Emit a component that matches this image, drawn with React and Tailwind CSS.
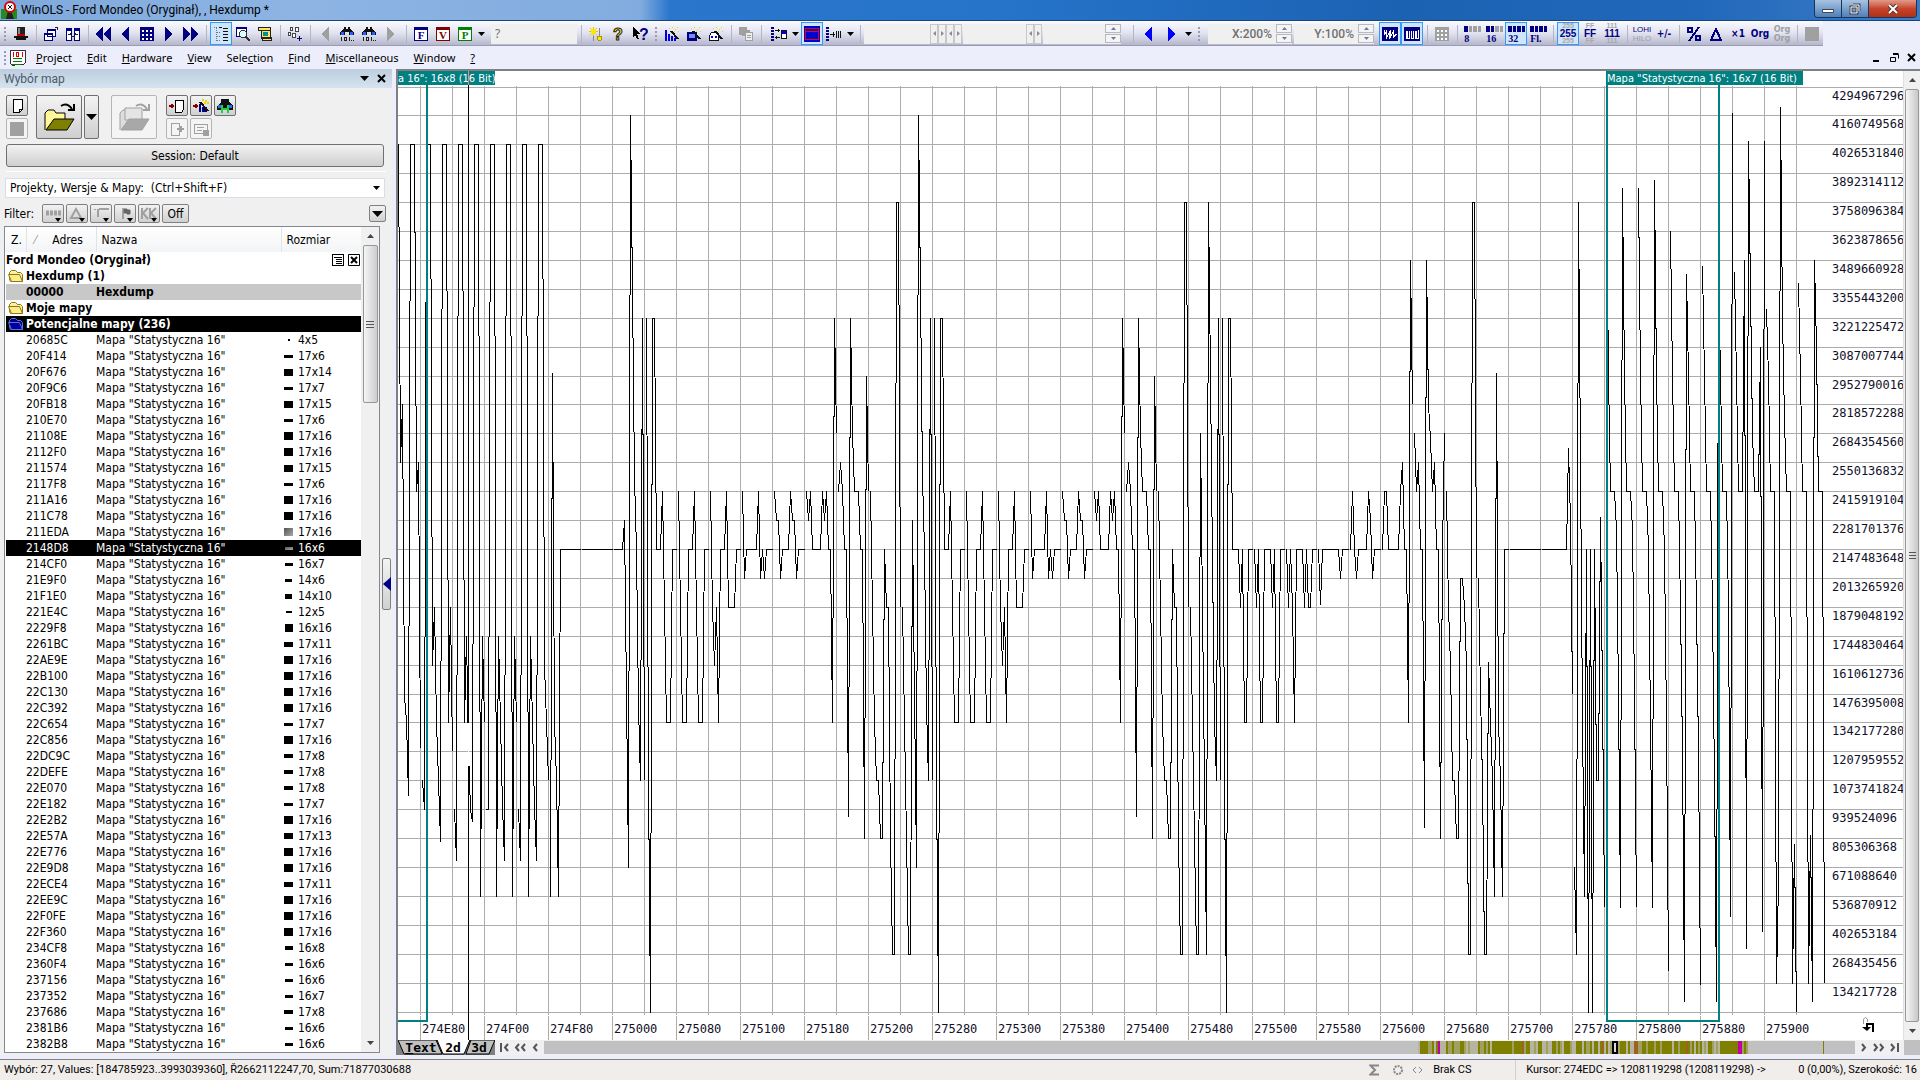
import { useState } from "react";

const NAVY = "#000080";

/* ---------- data ---------- */

const maps = [
  ["20685C", 4, 5], ["20F414", 17, 6], ["20F676", 17, 14], ["20F9C6", 17, 7],
  ["20FB18", 17, 15], ["210E70", 17, 6], ["21108E", 17, 16], ["2112F0", 17, 16],
  ["211574", 17, 15], ["2117F8", 17, 6], ["211A16", 17, 16], ["211C78", 17, 16],
  ["211EDA", 17, 16], ["2148D8", 16, 6], ["214CF0", 16, 7], ["21E9F0", 14, 6],
  ["21F1E0", 14, 10], ["221E4C", 12, 5], ["2229F8", 16, 16], ["2261BC", 17, 11],
  ["22AE9E", 17, 16], ["22B100", 17, 16], ["22C130", 17, 16], ["22C392", 17, 16],
  ["22C654", 17, 7], ["22C856", 17, 16], ["22DC9C", 17, 8], ["22DEFE", 17, 8],
  ["22E070", 17, 8], ["22E182", 17, 7], ["22E2B2", 17, 16], ["22E57A", 17, 13],
  ["22E776", 17, 16], ["22E9D8", 17, 16], ["22ECE4", 17, 11], ["22EE9C", 17, 16],
  ["22F0FE", 17, 16], ["22F360", 17, 16], ["234CF8", 16, 8], ["2360F4", 16, 6],
  ["237156", 16, 6], ["237352", 16, 7], ["237686", 17, 8], ["2381B6", 16, 6],
  ["2382B8", 16, 6],
];

const flat = Array(16).fill(16);

// 16 samples per row, unit is 1/32 of the full 32 bit range
const block = [
  [24, 8, 0, 24, 24, 16, 16, 16, 18, 14, 10, 10, 10, 16, 16, 16],
  [18, 14, 10, 10, 10, 16, 16, 16, 18, 14, 10, 10, 10, 16, 16, 16],
  [18, 14, 12, 14, 10, 16, 16, 16, 18, 14, 14, 14, 14, 16, 16, 16],
  [18, 15, 16, 16, 16, 16, 16, 16, 18, 15, 16, 15, 16, 16, 16, 16],
  [18, 17, 17, 15, 16, 16, 16, 16, 18, 17, 17, 15, 16, 16, 16, 16],
  [18, 17, 18, 16, 16, 16, 16, 16, 18, 17, 18, 16, 16, 10, 24, 20],
  [18, 19, 18, 16, 16, 6.75, 24, 20, 18, 18, 18, 16, 16, 6, 22, 18],
  [18, 14, 10, 8, 8, 6, 6, 16, 14, 14, 6, 2, 2, 28, 28, 14],
];

const samples = [
  [30, 30, 30, 30, 30, 19, 21, 10.9, 10.1, 7.5, 30, 30, 30, 18, 19, 9.1],
  [8, 7, 30, 30, 30, 12, 14, 10, 8, 5.9, 30, 30, 30, 10, 14, 9],
  [7, 5.25, 30, 30, 30, 10, 13, 9, 7, 6.6, 30, 30, 30, 4, 13, 10],
  [7, 7, 30, 30, 30, 4, 13, 10, 7.1, 5.25, 30, 30, 30, 4, 13, 10],
  [7, 5.25, 30, 30, 30, 4, 13, 10, 7.1, 5.25, 30, 30, 30, 12, 10, 8],
  [4, 22.1, 10, 8, 4, 16, 16, 16, 16, 16, 16, 16, 16, 16, 16, 16],
  flat,
  [16, 16, 16, 16, 16, 17, 11, 5, 31, 25, 18.5, 16, 10.6, 8, 24, 8],
  ...block,
  [14, 10, 6, 2, 2, 17, 11, 5, 31, 25, 18.5, 16, 10.6, 8, 24, 8],
  ...block,
  [14, 10, 6, 2, 2, 20, 14, 8, 2, 28, 22, 15.6, 10, 8, 24, 8],
  [24, 8, 0, 24, 24, 16, 16, 16, 16, 14, 16, 10, 10, 16, 16, 16],
  [16, 14, 16, 10, 10, 16, 16, 16, 16, 14, 16, 10, 10, 16, 16, 16],
  [16, 14, 16, 14, 10, 16, 16, 16, 16, 14, 16, 14, 14, 16, 16, 16],
  [16, 14.1, 16, 16, 16, 16, 16, 16, 16, 16, 16, 15, 16, 16, 16, 16],
  [16, 18, 16, 15, 16, 16, 16, 16, 16, 18, 17, 15, 16, 16, 16, 16],
  [16, 18, 18, 16, 16, 16, 16, 16, 16, 18, 19, 16, 16, 10, 26, 21],
  [20, 18, 19, 16, 16, 6.4, 26, 21, 19.8, 18, 19, 16, 16, 6, 16, 20],
  [18, 14, 12, 8, 8, 6, 6, 15, 15, 14, 12, 2, 2, 28, 28, 15],
  [15, 11, 8, 2, 2, 12.1, 10, 8, 4, 22.1, 10, 8, 4, 16, 16, 16],
  flat,
  [16, 16, 16, 16, 16, 16, 16, 16, 16, 16, 16, 16, 16, 19.5, 17, 11],
  [5, 2, 28, 19, 10, 4, 16, 0, 16, 0, 16, 8, 8, 17.1, 11, 3.6],
  [28.5, 22, 18, 18, 18, 16.7, 11, 3.6, 28.5, 22, 18, 18, 18, 16.7, 11, 3.6],
  [28.5, 22, 18, 18, 18, 16, 10, 3.6, 28.75, 22, 18, 18, 18, 16, 10, 1.4],
  [27, 22, 18, 18, 18, 14, 9, 0.35, 25.5, 22, 18, 18, 18, 14, 9, 0.9],
  [25.8, 22, 18, 18, 18, 14, 8, 0.35, 25.8, 22, 18, 18, 18, 14, 3.3, 31.1],
  [25.6, 22, 18, 18, 18, 26, 2.2, 30.1, 25, 20, 18, 18, 18, 23, 2.8, 30.1],
  [24.3, 22, 18, 18, 18, 1, 4.5, 31.3, 24, 20.5, 18, 18, 18, 1, 5.8, 0],
  [25.2, 22, 18, 18, 18, 1, 6.1, 0.35, 26, 23, 18, 18, 18, 1],
];

/* ---------- small building blocks ---------- */

const Pix = ({ children, size = 16 }) => (
  <svg width={size} height={size} viewBox="0 0 16 16" shapeRendering="crispEdges" fill="none" className="shrink-0" aria-hidden="true">
    {children}
  </svg>
);

const Down = () => (
  <svg width="7" height="4" viewBox="0 0 7 4" aria-hidden="true">
    <path d="M0 0h7L3.500 4z" fill="#000" />
  </svg>
);

const Tool = ({ label, on, children }) => (
  <button
    type="button"
    aria-label={label}
    className={
      on
        ? "flex h-[23px] w-[22px] shrink-0 items-center justify-center border border-[#3399ff] bg-[#cfe5fa]"
        : "flex h-[23px] w-[22px] shrink-0 items-center justify-center"
    }
  >
    {children}
  </button>
);

const Drop = ({ label }) => (
  <button type="button" aria-label={label} className="flex h-[22px] w-[11px] shrink-0 items-center justify-center">
    <Down />
  </button>
);

const Sep = () => (
  <div className="flex w-2 shrink-0 justify-center">
    <div className="h-[18px] w-px bg-[#b4b5c4]" />
  </div>
);

const Grip = () => (
  <div className="flex w-[10px] shrink-0 flex-col items-center gap-[2px]">
    <i className="size-[2px] bg-[#9a9bb0]" />
    <i className="size-[2px] bg-[#9a9bb0]" />
    <i className="size-[2px] bg-[#9a9bb0]" />
    <i className="size-[2px] bg-[#9a9bb0]" />
  </div>
);

const Spin = ({ label }) => (
  <div className="flex w-4 shrink-0 flex-col gap-px">
    <button type="button" aria-label={`${label} up`} className="flex h-[9px] items-center justify-center border border-[#b8b8c0] bg-[#f4f4f4]">
      <svg width="5" height="3" aria-hidden="true"><path d="M0 3h5L2.500 0z" fill="#6b78a8" /></svg>
    </button>
    <button type="button" aria-label={`${label} down`} className="flex h-[9px] items-center justify-center border border-[#b8b8c0] bg-[#f4f4f4]">
      <svg width="5" height="3" aria-hidden="true"><path d="M0 0h5L2.500 3z" fill="#6b78a8" /></svg>
    </button>
  </div>
);

const SideSpin = ({ label }) => (
  <div className="flex w-4 shrink-0">
    <button type="button" aria-label={`${label} left`} className="flex h-5 w-2 items-center justify-center border border-[#c8c8cc] bg-[#f0f0f0]">
      <svg width="3" height="5" aria-hidden="true"><path d="M3 0v5L0 2.500z" fill="#8a8a94" /></svg>
    </button>
    <button type="button" aria-label={`${label} right`} className="flex h-5 w-2 items-center justify-center border border-[#c8c8cc] bg-[#f0f0f0]">
      <svg width="3" height="5" aria-hidden="true"><path d="M0 0v5L3 2.500z" fill="#8a8a94" /></svg>
    </button>
  </div>
);

/* ---------- icons ---------- */

const Hat = () => (
  <Pix>
    <path d="M4 1h8v9H4z" fill="#222" />
    <path d="M4 8h8v2H4z" fill="#c00000" />
    <path d="M1 10h14v2H1zM3 12h10v2H3z" fill="#111" />
    <path d="M5 2h2v6H5z" fill="#888" />
  </Pix>
);

const Windows = ({ split }) => (
  <Pix>
    {split ? (
      <>
        <path d="M1.500 3.500h5v11h-5zM9.500 3.500h5v11h-5z" fill="#fff" stroke={NAVY} />
        <path d="M1 2h6v3H1zM9 2h6v3H9z" fill={NAVY} />
        <path d="M3 8.500h3M10 8.500h3M6 10.500h4M6 7l-2 2M10 7l2 2" stroke="#222" />
      </>
    ) : (
      <>
        <path d="M4.500 3.500h8v7h-8zM1.500 7.500h8v7h-8z" fill="#fff" stroke={NAVY} />
        <path d="M4 3h9v2H4zM1 7h9v2H1z" fill={NAVY} />
        <path d="M12 1.500h3M14.500 1v3" stroke="#222" />
      </>
    )}
  </Pix>
);

const Arrow = ({ dir, double, color = NAVY }) => (
  <Pix>
    <g transform={dir === "right" ? "matrix(-1 0 0 1 16 0)" : undefined} fill={color}>
      {double ? <path d="M8 1v14L0 8zM16 1v14L8 8z" /> : <path d="M12 1v14L4 8z" />}
    </g>
  </Pix>
);

const GridIcon = ({ color = NAVY }) => (
  <Pix>
    <path d="M1 1h14v14H1z" fill={color} />
    <path d="M3 4h2v2H3zM7 4h2v2H7zM11 4h2v2h-2zM3 8h2v2H3zM7 8h2v2H7zM11 8h2v2h-2zM3 12h2v2H3zM7 12h2v2H7zM11 12h2v2h-2z" fill="#fff" />
  </Pix>
);

const Tree = () => (
  <Pix>
    <path d="M1 1.500h4M3.500 2v13M4 6.500h4M4 10.500h4M4 14.500h4" stroke="#777" strokeDasharray="1 1" />
    <path d="M6 1.500h3M10 2.500h5M10 5.500h5M10 8.500h5M10 11.500h5M10 14.500h5" stroke="#111" />
  </Pix>
);

const Lens = () => (
  <Pix>
    <path d="M1.500 1.500h10v9h-10z" fill="#fff" stroke={NAVY} />
    <path d="M1 1h11v2H1z" fill={NAVY} />
    <circle cx="8" cy="8" r="3.500" fill="#dff" stroke="#333" />
    <path d="M11 11l4 4" stroke="#333" strokeWidth="2" />
  </Pix>
);

const Scroll = () => (
  <Pix>
    <path d="M1.500 1.500h12v3h-12zM4.500 4.500h9v8h-9zM4.500 11.500h10v3h-9z" fill="#ffe45c" stroke="#222" />
    <path d="M6 6h5v4H6z" fill="#009090" />
  </Pix>
);

const Steps = () => (
  <Pix>
    <path d="M3.500 1.500h2v3h-2zM1.500 6.500h2v3h-2zM8.500 1.500h3v4h-3zM5.500 7.500h3v4h-3z" fill="#fff" stroke="#444" />
    <path d="M10 12.500h5M12.500 10v5" stroke={NAVY} />
  </Pix>
);

const Binoculars = () => (
  <Pix>
    <path d="M5 1h2v2h2V1h2v2l4 3v3h-5V6H6v3H1V6l4-3z" fill="#111" />
    <path d="M2 6h3v3H2zM11 6h3v3h-3z" fill="#2a5cff" />
    <path d="M2.500 11v4M5.500 11.500h2v3h-2zM10.500 11v4M12 14.500h1M14 14.500h1" stroke="#222" />
  </Pix>
);

const Letter = ({ ch, color }) => (
  <Pix>
    <path d="M1.500 2.500h13v12h-13z" fill="#fff" stroke={color} />
    <path d="M1 1h14v3H1z" fill={color} />
    <text x="8" y="13" textAnchor="middle" fontSize="11" fontWeight="700" fontFamily="Liberation Serif, serif" fill={color}>{ch}</text>
  </Pix>
);

const Mark = ({ cursor }) => (
  <Pix>
    {cursor && <path d="M1 1l7 7H5l2 5H5L3 9l-2 2z" fill="#000" />}
    <text
      x={cursor ? 12 : 8}
      y="14"
      textAnchor="middle"
      fontSize="16"
      fontWeight="700"
      fontFamily="Liberation Sans, sans-serif"
      fill={cursor ? NAVY : "#ffe600"}
      stroke={cursor ? "none" : "#222"}
      strokeWidth="1"
    >
      ?
    </text>
  </Pix>
);

const Sun = () => (
  <Pix>
    <path d="M5 1v9M1 5.500h9M2 2l7 7M9 2L2 9" stroke="#d8c800" />
    <path d="M3 3h5v5H3z" fill="#ffe600" />
    <path d="M5.500 10v5M11.500 2v9" stroke="#888" />
    <path d="M9 10h5l-1 4h-3z" fill="#ffe600" stroke="#a89800" />
  </Pix>
);

const Wand = ({ kind }) => (
  <Pix>
    {kind === 0 && <path d="M1 4h2v11H1zM4 8h2v7H4zM7 10h2v5H7zM10 12h2v3h-2z" fill="#0000e0" />}
    {kind === 1 && <path d="M1 6h10v9H1z" fill={NAVY} />}
    {kind === 1 && <path d="M3 8h6v4H3z" fill="#6f8fff" />}
    {kind === 2 && <path d="M1.500 9.500l2-3h4l3 3v5h-9z" fill="#fff" stroke="#111" />}
    {kind === 2 && <path d="M3 10h2v2H3zM7 10h2v2H7z" fill="#0000e0" />}
    <path d="M7 5l7 8" stroke="#111" strokeWidth="2" />
    <path d="M5 2h1v1H5zM8 1h1v1H8zM11 3h1v1h-1zM13 1h1v1h-1zM14 5h1v1h-1zM10 5h1v1h-1z" fill="#e8d800" />
  </Pix>
);

const Copy = () => (
  <Pix>
    <path d="M1 1h8v8H1zM4 4h8v6H4z" fill="#a0a0a0" />
    <path d="M7.500 6.500h7v8h-7z" fill="#eee" stroke="#a0a0a0" />
    <path d="M9 9.500h4M9 11.500h4" stroke="#a0a0a0" />
  </Pix>
);

const Rows = ({ fill }) => (
  <Pix>
    <path d="M1.500 1v14" stroke={NAVY} strokeWidth="3" strokeDasharray="2 1" />
    {fill ? (
      <path d="M4 8.500h5M7.500 6v5M10.500 5v7M12.500 5v7M14.500 5v7" stroke="#111" />
    ) : (
      <>
        <path d="M4 4.500h5M7.500 3v3M4 11.500h5M5.500 10v3" stroke="#111" />
        <path d="M10.500 4.500h5v8h-5z" fill="#fff" stroke="#111" />
        <path d="M11 5h4v3h-4z" fill="#0000e0" />
      </>
    )}
  </Pix>
);

const RedBox = () => (
  <Pix>
    <path d="M0 0h16v16H0z" fill="#0000d0" />
    <path d="M1.500 2.500h13v11h-13zM2 5.500h12" stroke="#f00000" />
  </Pix>
);

const Wave = ({ low }) => (
  <Pix size={18}>
    <path d="M1 2h14v12H1z" fill={NAVY} />
    {low ? <path d="M3.500 5v7h2V5M7.500 5v7h2V5M11.500 5v7h2V4" stroke="#fff" /> : <path d="M3 4v5l2-4v6l3-5v5l3-5v5l3-3" stroke="#fff" />}
  </Pix>
);

const Bits = ({ n, label }) => (
  <Pix size={18}>
    {[0, 1, 2, 3].map((i) => (
      <rect key={i} x={1 + i * 4} y="1" width="3" height="5" fill={i < n ? NAVY : "#a0a0a0"} />
    ))}
    <text x="1" y="15" fontSize="9" fontFamily="Liberation Serif, serif" fontWeight="700" fill={NAVY}>{label}</text>
  </Pix>
);

const Radix = ({ text }) => (
  <span className="flex h-[21px] flex-col items-center justify-center font-['Liberation_Sans',sans-serif] font-bold">
    <span className="text-[7px] leading-[6px] text-[#a8a8a8]">{text}</span>
    <span className="text-[10px] leading-[9px] text-[#000080]">{text}</span>
    <span className="text-[7px] leading-[6px] text-[#a8a8a8]">{text}</span>
  </span>
);

const Word = ({ children, dim }) => (
  <span
    className={
      dim
        ? "font-['DejaVu_Sans_Condensed',sans-serif] text-[9px] font-bold leading-[9px] text-[#a0a0a0]"
        : "font-['DejaVu_Sans_Condensed',sans-serif] text-[10px] font-bold leading-[10px] text-[#000080]"
    }
  >
    {children}
  </span>
);

const Folder = ({ dark }) => (
  <svg width="16" height="13" viewBox="0 0 16 13" className="mr-[2px] inline-block align-[-2px]" aria-hidden="true">
    <path d="M1.500 10.500v-7l2-2h4l2 2h3l2 2v7h-12z" fill={dark ? "#000080" : "#fff0a0"} stroke={dark ? "#6070e0" : "#8a7a10"} />
    <path d="M3.500 12.500L.5 5.500h11l3 7z" fill={dark ? "#0000a0" : "#ffeb8c"} stroke={dark ? "#6070e0" : "#8a7a10"} />
  </svg>
);

/* ---------- bars ---------- */

const TitleBar = () => (
  <header className="flex h-[21px] shrink-0 items-start justify-between border-b border-[#1b4478] bg-[linear-gradient(90deg,#7fa9dc_0px,#8db4e3_300px,#82acdf_640px,#2a76cc_670px,#2574ca_1000px,#1c62b3_1400px,#2268ba_1700px,#3a7cc8_100%)]">
    <div className="flex h-5 items-center gap-1 pl-[1px]">
      <svg width="16" height="18" viewBox="0 0 16 18" aria-hidden="true">
        <path d="M0 8h16v10H0z" fill="#228b22" />
        <path d="M5 18l2-8h3l3 8z" fill="#222" />
        <circle cx="9" cy="6" r="5" fill="#fff" stroke="#e00000" strokeWidth="2" />
        <path d="M7 4l4 4M11 4l-4 4" stroke="#111" />
      </svg>
      <h1 className="font-['Roboto',sans-serif] text-[12px] leading-5 text-black">WinOLS - Ford Mondeo (Oryginał), , Hexdump *</h1>
    </div>
    <div className="mr-[3px] flex h-[18px] overflow-hidden rounded-b-[4px] border border-t-0 border-[#16365c]">
      <button type="button" aria-label="Minimize" className="flex w-[27px] items-center justify-center border-r border-[#16365c] bg-gradient-to-b from-[#a9c4e2] to-[#4f80b8] pt-1">
        <svg width="12" height="4" aria-hidden="true"><path d="M.5 .5h11v3H.500z" fill="#fff" stroke="#445" /></svg>
      </button>
      <button type="button" aria-label="Restore" className="flex w-[27px] items-center justify-center border-r border-[#16365c] bg-gradient-to-b from-[#a9c4e2] to-[#4f80b8]">
        <svg width="12" height="12" fill="none" aria-hidden="true">
          <path d="M4 2h6v6M2 4h6v6H2z" stroke="#445" strokeWidth="3" />
          <path d="M4 2h6v6M2 4h6v6H2z" stroke="#fff" />
        </svg>
      </button>
      <button type="button" aria-label="Close" className="flex w-[47px] items-center justify-center bg-gradient-to-b from-[#e09a8a] via-[#c8442c] to-[#b03018]">
        <svg width="12" height="10" aria-hidden="true">
          <path d="M2 1l8 8M10 1L2 9" stroke="#533" strokeWidth="4" />
          <path d="M2 1l8 8M10 1L2 9" stroke="#fff" strokeWidth="2" />
        </svg>
      </button>
    </div>
  </header>
);

const ToolBar = () => (
  <div className="flex h-[25px] shrink-0 bg-[#eceefb]">
    <div className="flex shrink-0 items-center border-b border-[#9a9bb4] bg-gradient-to-b from-[#fafbff] via-[#e2e3f0] to-[#b6b7cb] pt-px">
      <Grip />
      <Tool label="Hat"><Hat /></Tool>
      <Sep />
      <Tool label="Cascade"><Windows /></Tool>
      <Tool label="Split"><Windows split /></Tool>
      <Sep />
      <Tool label="First"><Arrow dir="left" double /></Tool>
      <Tool label="Previous"><Arrow dir="left" /></Tool>
      <Tool label="Grid"><GridIcon /></Tool>
      <Tool label="Next"><Arrow dir="right" /></Tool>
      <Tool label="Last"><Arrow dir="right" double /></Tool>
      <Sep />
      <Tool label="Tree" on><Tree /></Tool>
      <Tool label="Preview"><Lens /></Tool>
      <Tool label="Script"><Scroll /></Tool>
      <Sep />
      <Tool label="Steps"><Steps /></Tool>
      <Sep />
      <Tool label="Back"><Arrow dir="left" color="#a0a0a0" /></Tool>
      <Tool label="Search back"><Binoculars /></Tool>
      <Tool label="Search"><Binoculars /></Tool>
      <Tool label="Forward"><Arrow dir="right" color="#a0a0a0" /></Tool>
      <Sep />
      <Tool label="F"><Letter ch="F" color="#000080" /></Tool>
      <Tool label="V"><Letter ch="V" color="#800000" /></Tool>
      <Tool label="P"><Letter ch="P" color="#008000" /></Tool>
      <Drop label="P menu" />
      <input aria-label="Quick help" defaultValue="?" className="ml-1 h-5 w-[86px] bg-[#f0f0f0] px-1 text-[12px] text-[#707070]" />
      <Sep />
      <Tool label="Light"><Sun /></Tool>
      <Tool label="Help"><Mark /></Tool>
      <Tool label="Context help"><Mark cursor /></Tool>
      <Grip />
      <Tool label="Wizard bars"><Wand kind={0} /></Tool>
      <Tool label="Wizard map"><Wand kind={1} /></Tool>
      <Tool label="Wizard search"><Wand kind={2} /></Tool>
      <Sep />
      <Tool label="Copy"><Copy /></Tool>
      <Sep />
      <div className="w-[3px]" />
      <Tool label="Rows"><Rows /></Tool>
      <Drop label="Rows menu" />
      <Tool label="Selection" on><RedBox /></Tool>
      <Tool label="Columns"><Rows fill /></Tool>
      <Drop label="Columns menu" />
      <Sep />
      <div className="flex h-5 items-center bg-[#f0f0f0]">
        <input aria-label="Offset" className="h-5 w-[66px]" />
        <SideSpin label="Offset" />
        <SideSpin label="Fine offset" />
      </div>
      <div className="ml-px flex h-5 items-center bg-[#f0f0f0]">
        <input aria-label="Width" className="h-5 w-[63px]" />
        <SideSpin label="Width" />
      </div>
      <div className="ml-px flex h-5 items-center bg-[#f0f0f0]">
        <input aria-label="Value" className="h-5 w-[62px]" />
        <Spin label="Value" />
      </div>
      <div className="w-2" />
      <Sep />
      <div className="flex gap-[2px]">
        <Tool label="Left"><Arrow dir="left" color="#0000ff" /></Tool>
        <Tool label="Right"><Arrow dir="right" color="#0000ff" /></Tool>
      </div>
      <Drop label="Move menu" />
      <Grip />
      <div className="ml-1 flex h-5 items-center bg-[#f0f0f0]">
        <input aria-label="X zoom" defaultValue="X:200%" className="h-5 w-[68px] pr-1 text-right font-['Roboto',sans-serif] text-[12px] font-medium text-[#707070]" />
        <Spin label="X zoom" />
      </div>
      <div className="ml-[2px] flex h-5 items-center bg-[#f0f0f0]">
        <input aria-label="Y zoom" defaultValue="Y:100%" className="h-5 w-[64px] pr-1 text-right font-['Roboto',sans-serif] text-[12px] font-medium text-[#707070]" />
        <Spin label="Y zoom" />
      </div>
      <div className="w-[5px]" />
      <Tool label="Wave" on><Wave /></Tool>
      <Tool label="Levels" on><Wave low /></Tool>
      <Sep />
      <Tool label="Table"><GridIcon color="#a0a0a0" /></Tool>
      <Sep />
      <Tool label="8 bit"><Bits n={1} label="8" /></Tool>
      <Tool label="16 bit"><Bits n={2} label="16" /></Tool>
      <Tool label="32 bit" on><Bits n={4} label="32" /></Tool>
      <Tool label="Float"><Bits n={4} label="Fl." /></Tool>
      <Sep />
      <Tool label="Decimal" on><Radix text="255" /></Tool>
      <Tool label="Hexadecimal"><Radix text="FF" /></Tool>
      <Tool label="Binary"><Radix text="111" /></Tool>
      <Sep />
      <Tool label="Byte order">
        <span className="flex flex-col font-['Liberation_Sans',sans-serif] text-[8px] leading-[9px]">
          <span className="text-[#000080]">LOHI</span>
          <span className="text-[#a0a0a0]">HILO</span>
        </span>
      </Tool>
      <Tool label="Signed"><Word>+/-</Word></Tool>
      <Sep />
      <Tool label="Percent">
        <Pix>
          <circle cx="4" cy="4" r="2.500" stroke={NAVY} strokeWidth="2" />
          <circle cx="12" cy="12" r="2.500" stroke={NAVY} strokeWidth="2" />
          <path d="M13 1L3 15" stroke={NAVY} strokeWidth="2" />
        </Pix>
      </Tool>
      <Tool label="Difference">
        <Pix><path d="M8 3l5 11H3z" stroke={NAVY} strokeWidth="2" /></Pix>
      </Tool>
      <Tool label="Factor"><Word>×1</Word></Tool>
      <Tool label="Original"><Word>Org</Word></Tool>
      <Tool label="Original compare"><Word dim>Org Org</Word></Tool>
      <Sep />
      <Tool label="Stop"><Pix><path d="M1 1h14v14H1z" fill="#a0a0a0" /></Pix></Tool>
    </div>
  </div>
);

const menu = [
  ["", "P", "roject"],
  ["", "E", "dit"],
  ["", "H", "ardware"],
  ["", "V", "iew"],
  ["Sele", "c", "tion"],
  ["", "F", "ind"],
  ["", "M", "iscellaneous"],
  ["", "W", "indow"],
  ["", "?", ""],
];

const MenuBar = () => (
  <nav className="flex h-[23px] shrink-0 items-center justify-between bg-[#eceefb] pr-1">
    <div className="flex items-center">
      <Grip />
      <svg width="16" height="16" viewBox="0 0 16 16" shapeRendering="crispEdges" aria-hidden="true">
        <path d="M.5 .5h15v12l-2 2H6l-3 1-2.500-2z" fill="#fff" stroke="#333" />
        <path d="M3.500 2v5M6.500 2.500h2v4h-2zM12.500 2v5" stroke="#e00000" fill="none" />
        <path d="M3 8.500h9M3 11.500h9M2 14.500h9" stroke="#008000" />
      </svg>
      <div className="ml-[10px] flex gap-[15px]">
        {menu.map(([a, b, c]) => (
          <button key={a + b + c} type="button" className="text-[11px] leading-5 text-black">
            {a}
            <u>{b}</u>
            {c}
          </button>
        ))}
      </div>
    </div>
    <div className="flex items-center gap-2">
      <button type="button" aria-label="Minimize document" className="flex size-[9px] items-end"><span className="h-[2px] w-[6px] bg-black" /></button>
      <button type="button" aria-label="Restore document">
        <svg width="9" height="9" fill="none" stroke="#000" aria-hidden="true"><path d="M3 1.500h5.500v4M.5 4.500h5v4h-5zM3 .5h5.500" /></svg>
      </button>
      <button type="button" aria-label="Close document">
        <svg width="9" height="9" stroke="#000" strokeWidth="2" aria-hidden="true"><path d="M1 1l7 7M8 1L1 8" /></svg>
      </button>
    </div>
  </nav>
);

/* ---------- map list ---------- */

const PanelButton = ({ label, wide, off, children }) => (
  <button
    type="button"
    aria-label={label}
    className={[
      "flex shrink-0 items-center justify-center rounded-[2px] border",
      wide ? "h-[44px] w-[46px]" : "h-[21px] w-[22px]",
      off ? "border-[#b5b5b5] bg-[#f4f4f4]" : "border-[#707070] bg-gradient-to-b from-[#f4f4f4] to-[#cfcfcf]",
    ].join(" ")}
  >
    {children}
  </button>
);

const OpenFolder = ({ off }) => (
  <svg width="32" height="30" viewBox="0 0 32 30" aria-hidden="true">
    <path d="M2 28V11l3-3h6l2 3h9v6" fill={off ? "#ddd" : "#fff799"} stroke={off ? "#a0a0a0" : "#000"} />
    {off && <path d="M7 6h17v12H7z" fill="#e4e4e4" stroke="#a0a0a0" />}
    <path d="M3 28l8-11h20l-7 11z" fill={off ? "#a8a8a8" : "#808000"} stroke={off ? "#a0a0a0" : "#000"} />
    <path d="M18 4q6-4 11 3M31 2v6h-6" fill="none" stroke={off ? "#a0a0a0" : "#000"} strokeWidth="2" />
  </svg>
);

const filters = ["Bits", "Delta", "Info", "Flag", "KK"];

const FilterGlyph = ({ name }) => (
  <svg width="18" height="16" viewBox="0 0 18 16" fill="none" stroke="#a0a0a0" className="shrink-0" aria-hidden="true">
    {name === "Bits" && <path d="M2 7h15" strokeWidth="5" strokeDasharray="3 1" />}
    {name === "Delta" && <path d="M8 3l5 9H3z" strokeWidth="2" />}
    {name === "Info" && <path d="M3 3v1M6 3v8M7 3h10" strokeWidth="2" />}
    {name === "Flag" && <path d="M7 2v11M8 3h3v4H8zM11 4h3v4h-3z" stroke="#666" fill="#666" />}
    {name === "KK" && <path d="M2 2v11M8 2L3 7l5 6M10 2v11M16 2l-5 5 5 6" strokeWidth="2" />}
    <path d="M11 12h6l-3 4z" fill="#000" stroke="none" />
  </svg>
);

const MapList = () => {
  const [selected, setSelected] = useState("2148D8");

  return (
    <div className="flex min-h-0 flex-1 overflow-hidden border border-[#828790] bg-white">
      <div className="min-w-0 flex-1 overflow-hidden pl-px">
        <table className="w-full table-fixed border-collapse whitespace-pre text-[12px] leading-4">
          <colgroup>
            <col className="w-[20px]" />
            <col className="w-[70px]" />
            <col />
            <col className="w-[80px]" />
          </colgroup>
          <thead>
            <tr className="h-[25px] bg-gradient-to-b from-white to-[#f3f4f6] text-left">
              <th className="border-r border-[#e0e3e8] pl-[5px] font-normal">Z.</th>
              <th className="border-r border-[#e0e3e8] pl-2 font-normal"><span className="mr-4 text-[#999]">⁄</span>Adres</th>
              <th className="border-r border-[#e0e3e8] pl-[5px] font-normal">Nazwa</th>
              <th className="pl-[5px] font-normal">Rozmiar</th>
            </tr>
          </thead>
          <tbody>
            <tr className="h-4 font-bold">
              <td colSpan={3} className="p-0">Ford Mondeo (Oryginał)</td>
              <td className="p-0">
                <div className="flex justify-end gap-[4px] pr-px">
                  <button type="button" aria-label="Properties">
                    <svg width="12" height="12" stroke="#000" fill="none" shapeRendering="crispEdges" aria-hidden="true"><path d="M.5 .5h11v11H.500zM2 3.500h8M4 5.500h6M4 7.500h6M4 9.500h6" /></svg>
                  </button>
                  <button type="button" aria-label="Close project">
                    <svg width="12" height="12" stroke="#000" fill="none" aria-hidden="true"><path d="M.5 .5h11v11H.500z" /><path d="M3 3l6 6M9 3L3 9" strokeWidth="2" /></svg>
                  </button>
                </div>
              </td>
            </tr>
            <tr className="h-4 font-bold"><td colSpan={4} className="p-0 pl-[2px]"><Folder />Hexdump (1)</td></tr>
            <tr className="h-4 bg-[#c8c8c8] font-bold">
              <td />
              <td className="p-0">00000</td>
              <td colSpan={2} className="p-0">Hexdump</td>
            </tr>
            <tr className="h-4 font-bold"><td colSpan={4} className="p-0 pl-[2px]"><Folder />Moje mapy</td></tr>
            <tr className="h-4 bg-black font-bold text-white"><td colSpan={4} className="p-0 pl-[2px]"><Folder dark />Potencjalne mapy (236)</td></tr>
            {maps.map(([addr, w, h]) => (
              <tr key={addr} onClick={() => setSelected(addr)} className={addr === selected ? "h-4 bg-black text-white" : "h-4 text-black"}>
                <td className="p-0" />
                <td className="p-0">{addr}</td>
                <td className="p-0">Mapa "Statystyczna 16"</td>
                <td className="p-0">
                  <div className="flex items-center">
                    <span className="flex w-[15px] justify-center">
                      <i
                        className={addr === selected || addr === "211EDA" ? "bg-gradient-to-br from-[#555] to-[#aaa]" : "bg-black"}
                        style={{ width: Math.ceil(w / 2), height: Math.floor(h / 2) }}
                      />
                    </span>
                    <span className="pl-[2px]">{`${w}x${h}`}</span>
                  </div>
                </td>
              </tr>
            ))}
          </tbody>
        </table>
      </div>
      <div className="flex w-[18px] shrink-0 flex-col items-center bg-[#f0f0f0]">
        <button type="button" aria-label="Scroll up" className="flex h-[18px] w-full items-center justify-center">
          <svg width="7" height="4" aria-hidden="true"><path d="M0 4h7L3.500 0z" fill="#444" /></svg>
        </button>
        <div className="flex h-[158px] w-[15px] flex-col items-center justify-center gap-[2px] rounded-[2px] border border-[#979797] bg-gradient-to-r from-[#f5f5f5] to-[#cdcdcf]">
          <i className="h-px w-2 bg-[#555]" />
          <i className="h-px w-2 bg-[#555]" />
          <i className="h-px w-2 bg-[#555]" />
        </div>
        <div className="flex-1" />
        <button type="button" aria-label="Scroll down" className="flex h-[18px] w-full items-center justify-center">
          <svg width="7" height="4" aria-hidden="true"><path d="M0 0h7L3.500 4z" fill="#444" /></svg>
        </button>
      </div>
    </div>
  );
};

const SidePanel = () => (
  <aside className="flex w-[392px] shrink-0 flex-col bg-[#f0f0f0] font-['DejaVu_Sans_Condensed','Noto_Sans',sans-serif] text-[12px]">
    <div className="flex h-[19px] shrink-0 items-center justify-between bg-gradient-to-b from-[#bccddd] to-[#d6e3f1] pl-1 pr-[6px] text-[#4a5a6a]">
      <h2 className="font-['Roboto',sans-serif]">Wybór map</h2>
      <div className="flex items-center gap-2">
        <button type="button" aria-label="Panel menu">
          <svg width="9" height="5" aria-hidden="true"><path d="M0 0h9L4.500 5z" fill="#000" /></svg>
        </button>
        <button type="button" aria-label="Close panel">
          <svg width="9" height="9" stroke="#000" strokeWidth="2" aria-hidden="true"><path d="M1 1l7 7M8 1L1 8" /></svg>
        </button>
      </div>
    </div>

    <div className="flex shrink-0 items-start pl-[6px] pt-[7px]">
      <div className="flex flex-col gap-[2px]">
        <PanelButton label="New"><Pix><path d="M4.500 1.500h9v10l-3 3h-6z" fill="#fff" stroke="#000" /><path d="M13 11.500h-2.500v3" stroke="#000" /></Pix></PanelButton>
        <PanelButton label="Save" off><Pix><path d="M1 1h14v14H1z" fill="#a0a0a0" /></Pix></PanelButton>
      </div>
      <div className="ml-2 flex gap-[2px]">
        <PanelButton label="Open" wide><OpenFolder /></PanelButton>
        <button type="button" aria-label="Open menu" className="flex h-[44px] w-[15px] items-center justify-center rounded-[2px] border border-[#707070] bg-gradient-to-b from-[#f4f4f4] to-[#cfcfcf]">
          <svg width="11" height="6" aria-hidden="true"><path d="M0 0h11L5.500 6z" fill="#000" /></svg>
        </button>
      </div>
      <div className="ml-3">
        <PanelButton label="Open version" wide off><OpenFolder off /></PanelButton>
      </div>
      <div className="ml-[9px] grid grid-cols-3 gap-x-[2px] gap-y-[2px]">
        <PanelButton label="Import file">
          <Pix><path d="M6.500 2.500h8v9l-2 3h-6z" fill="#fff" stroke="#000" /><path d="M0 8h5M3 6v4" stroke="#800000" strokeWidth="2" /></Pix>
        </PanelButton>
        <PanelButton label="Import wizard">
          <Pix><path d="M0 8h5M3 6v4" stroke="#800000" strokeWidth="2" /><path d="M6 6h2v8H6zM9 9h5v5H9z" fill={NAVY} /><path d="M7 4l8 9" stroke="#111" strokeWidth="2" /><path d="M9 1h1v1H9zM12 2h1v1h-1zM14 4h1v1h-1zM11 4h1v1h-1z" fill="#e8d800" stroke="#e8d800" /></Pix>
        </PanelButton>
        <PanelButton label="Search projects">
          <Pix><path d="M4 1h8v3l4 4v4H0V8l4-4z" fill="#111" /><path d="M1 7h3v3H1zM12 7h3v3h-3z" fill="#2a6cff" /><path d="M4 7h2v8H4zM10 7h2v8h-2zM6 10h4v2H6z" fill="#20d040" /></Pix>
        </PanelButton>
        <PanelButton label="Export file" off>
          <Pix><path d="M2.500 2.500h8v12h-8z" stroke="#a0a0a0" /><path d="M8 8h7M12 5v6" stroke="#a0a0a0" strokeWidth="2" /></Pix>
        </PanelButton>
        <PanelButton label="Export map" off>
          <Pix><path d="M1.500 3.500h13v9h-13zM4 6h7M4 9h5" stroke="#a0a0a0" /><path d="M10 9h6v6h-6z" fill="#a0a0a0" /></Pix>
        </PanelButton>
      </div>
    </div>

    <button type="button" className="ml-[6px] mr-2 mt-[5px] h-[23px] shrink-0 rounded-[3px] border border-[#707070] bg-gradient-to-b from-[#f2f2f2] to-[#cfcfcf] leading-5">
      Session: Default
    </button>
    <div className="mx-[6px] mt-1 h-px shrink-0 bg-white" />

    <div className="relative ml-[5px] mr-[7px] mt-[6px] shrink-0">
      <select aria-label="Scope" className="block h-5 w-full appearance-none border border-[#d8dde8] bg-white px-1 leading-4">
        <option>{"Projekty, Wersje & Mapy:\u00a0 (Ctrl+Shift+F)"}</option>
      </select>
      <span className="pointer-events-none absolute right-[5px] top-2"><Down /></span>
    </div>

    <div className="mt-[6px] flex h-[19px] shrink-0 items-center pl-1 pr-[6px]">
      <span className="w-[38px]">Filter:</span>
      <div className="flex gap-[2px]">
        {filters.map((f) => (
          <button key={f} type="button" aria-label={f} className="flex h-[19px] w-[22px] items-center justify-center rounded-[2px] border border-[#808080] bg-gradient-to-b from-[#f2f2f2] to-[#d0d0d0]">
            <FilterGlyph name={f} />
          </button>
        ))}
        <button type="button" className="h-[19px] w-[27px] rounded-[2px] border border-[#808080] bg-gradient-to-b from-[#f2f2f2] to-[#d0d0d0] leading-4">Off</button>
      </div>
      <button type="button" aria-label="Filter menu" className="ml-auto flex size-[17px] items-center justify-center rounded-[2px] border border-[#808080] bg-gradient-to-b from-[#f2f2f2] to-[#d0d0d0]">
        <svg width="11" height="6" aria-hidden="true"><path d="M0 0h11L5.500 6z" fill="#000" /></svg>
      </button>
    </div>

    <div className="mb-[2px] ml-1 mt-[3px] flex min-h-0 flex-1 items-stretch gap-[2px]">
      <MapList />
      <div className="flex w-[10px] items-center">
        <button type="button" aria-label="Collapse panel" className="mb-[112px] flex h-[52px] w-[9px] items-center justify-center rounded-[2px] border border-[#808080] bg-gradient-to-b from-[#f4f4f4] to-[#d0d0d0]">
          <svg width="8" height="14" aria-hidden="true" className="shrink-0"><path d="M8 0v14L0 7z" fill="#000080" /></svg>
        </button>
      </div>
    </div>
  </aside>
);

/* ---------- chart ---------- */

const TOP = 16;
const BOTTOM = 941;
const STEP = (BOTTOM - TOP) / 32;
const ROW = 32;
const X0 = -10;

const levelY = (v) => Math.floor(BOTTOM - v * STEP) + 0.5;

const tracePath = samples
  .map((row, k) => {
    const x = X0 + k * ROW;
    const pts = row.map((v, i) => `L${x + 2 * (i + 1) + 0.5} ${levelY(v)}`);
    return `M${x + 1.5} ${levelY(row[0])}${pts.join("")}`;
  })
  .join("");

const Chart = () => {
  const levels = Array.from({ length: 33 }, (_, i) => i);
  const columns = Array.from({ length: 44 }, (_, i) => 22 + i * ROW);
  const addresses = Array.from({ length: 22 }, (_, i) => 0x274e80 + i * 0x80);

  return (
    <svg className="block min-h-0 w-full flex-1 bg-white" role="img" aria-label="Hexdump 2d">
      <g stroke="#acacac" shapeRendering="crispEdges">
        {levels.map((v) => (
          <line key={v} x1="0" x2="100%" y1={levelY(v)} y2={levelY(v)} />
        ))}
        {columns.map((x) => (
          <line key={x} x1={x + 0.5} x2={x + 0.5} y1="15" y2="944" />
        ))}
        {addresses.map((a, i) => (
          <line key={a} x1={22.5 + i * 64} x2={22.5 + i * 64} y1="945" y2="969" />
        ))}
      </g>

      <path d={tracePath} fill="none" stroke="#000" shapeRendering="crispEdges" />

      <g fill="none" stroke="#008080" strokeWidth="2" shapeRendering="crispEdges">
        <path d="M0 950H29V0" />
        <path d="M1209 0V950H1321V0" />
      </g>
      <rect x="0" y="0" width="97" height="14" fill="#008080" />
      <rect x="1208" y="0" width="197" height="14" fill="#008080" />

      <g fontFamily="DejaVu Sans Condensed, Noto Sans, sans-serif" fontSize="11" fill="#fff">
        <text x="0" y="11">a 16": 16x8 (16 Bit)</text>
        <text x="1209" y="11">Mapa "Statystyczna 16": 16x7 (16 Bit)</text>
      </g>

      <path d="M70.500 14V969" stroke="#000" shapeRendering="crispEdges" />
      <path d="M70.500 0V14" stroke="#ff7f7f" shapeRendering="crispEdges" />
      <path d="M70.500 652V695" stroke="#fff" shapeRendering="crispEdges" />

      <g fontFamily="DejaVu Sans Mono, monospace" fontSize="12" fill="#101028">
        {levels.slice(1).map((v) => (
          <text key={v} x="1434" y={levelY(v) + 12}>{v * 134217728}</text>
        ))}
        {addresses.map((a, i) => (
          <text key={a} x={24 + i * 64} y="962">{a.toString(16).toUpperCase()}</text>
        ))}
      </g>

      <path d="M1465.500 953v-5q2-3 4 0v3" fill="none" stroke="#999" />
      <path d="M1475 961v-8h-6v4" fill="none" stroke="#000" strokeWidth="2" />
      <path d="M1464 956h9l-4 4z" fill="#000" />
    </svg>
  );
};

// colours of the overview strip, one per 2px
const strip = Array.from({ length: 165 }, (_, i) => {
  const r = (i * 7919 + ((i * i * 31) % 97) * 13) % 100;
  const dense = i < 5 || (i > 36 && i < 50) || (i > 97 && i < 106) || (i > 118 && i < 140) || i > 150;
  if (r > 97) return "#c000a0";
  if (r > 94) return "#a06020";
  if (dense ? r > 18 : r > 62) return "#808000";
  return r % 2 ? "#a0a060" : "#b4b4a0";
});

const BottomTabs = () => (
  <div className="flex h-[15px] shrink-0 bg-[#f0f0f0]">
    <div className="relative w-[97px] shrink-0">
      <svg width="97" height="15" className="block" aria-hidden="true">
        <path d="M0 0h97v15H0z" fill="#808080" />
        <path d="M0 0h38l6 14H6z" fill="#c0c0c0" stroke="#000" />
        <path d="M97 0H73l-5 14h23z" fill="#c0c0c0" stroke="#000" />
        <path d="M39 0h33l-6 14H45z" fill="#fff" stroke="#000" />
        <path d="M40 0h31" stroke="#fff" strokeWidth="2" />
      </svg>
      <div className="absolute inset-0 flex pl-1 font-['DejaVu_Sans_Mono',monospace] text-[13px] font-bold leading-[14px]">
        <button type="button" className="w-[38px]"><u>T</u>ext</button>
        <button type="button" className="w-[26px]">2d</button>
        <button type="button" className="w-[26px]">3d</button>
      </div>
    </div>
    <div className="flex w-[49px] shrink-0 items-center justify-center gap-[5px]">
      <button type="button" aria-label="First page"><svg width="9" height="9" fill="none" stroke="#555" strokeWidth="2" aria-hidden="true"><path d="M1 0v9M8 1L5 4.500 8 8" /></svg></button>
      <button type="button" aria-label="Page back"><svg width="12" height="9" fill="none" stroke="#555" strokeWidth="2" aria-hidden="true"><path d="M5 1L2 4.500 5 8M11 1L8 4.500 11 8" /></svg></button>
      <button type="button" aria-label="Line back"><svg width="8" height="9" fill="none" stroke="#555" strokeWidth="2" aria-hidden="true"><path d="M6 1L3 4.500 6 8" /></svg></button>
    </div>
    <svg className="my-px block h-[13px] min-w-0 flex-1 bg-[#c0c0c0]" shapeRendering="crispEdges" aria-label="Overview" role="img">
      {strip.map((c, i) => (
        <rect key={i} x={874 + i * 2} y="0" width="2" height="13" fill={c} />
      ))}
      <rect x="1279" y="0" width="1" height="13" fill="#808000" />
      <rect x="1069" y="1" width="4" height="11" fill="#d8d8d8" stroke="#000" strokeWidth="2" />
    </svg>
    <div className="flex w-[49px] shrink-0 items-center justify-center gap-[5px]">
      <button type="button" aria-label="Line forward"><svg width="8" height="9" fill="none" stroke="#555" strokeWidth="2" aria-hidden="true"><path d="M2 1l3 3.500L2 8" /></svg></button>
      <button type="button" aria-label="Page forward"><svg width="12" height="9" fill="none" stroke="#555" strokeWidth="2" aria-hidden="true"><path d="M1 1l3 3.500L1 8M7 1l3 3.500L7 8" /></svg></button>
      <button type="button" aria-label="Last page"><svg width="9" height="9" fill="none" stroke="#555" strokeWidth="2" aria-hidden="true"><path d="M1 1l3 3.500L1 8M8 0v9" /></svg></button>
    </div>
    <div className="w-4 shrink-0 bg-[#c0c0c0]" />
  </div>
);

const ChartPane = () => (
  <main className="ml-[4px] flex min-w-0 flex-1 flex-col border-l-2 border-t-2 border-[#808080]">
    <div className="flex min-h-0 flex-1">
      <div className="flex min-w-0 flex-1 flex-col">
        <Chart />
      </div>
      <div className="flex w-[17px] shrink-0 flex-col items-center border-l border-[#e0e0e0] bg-[#f0f0f0]">
        <button type="button" aria-label="Scroll chart up" className="flex h-[18px] w-full items-center justify-center">
          <svg width="7" height="4" aria-hidden="true"><path d="M0 4h7L3.500 0z" fill="#444" /></svg>
        </button>
        <div className="flex w-[14px] flex-1 flex-col items-center justify-center gap-[2px] rounded-[2px] border border-[#979797] bg-gradient-to-r from-[#f5f5f5] to-[#c8c8ca]">
          <i className="h-px w-[7px] bg-[#555]" />
          <i className="h-px w-[7px] bg-[#555]" />
          <i className="h-px w-[7px] bg-[#555]" />
        </div>
        <button type="button" aria-label="Scroll chart down" className="flex h-[18px] w-full items-center justify-center">
          <svg width="7" height="4" aria-hidden="true"><path d="M0 0h7L3.500 4z" fill="#444" /></svg>
        </button>
      </div>
    </div>
    <BottomTabs />
  </main>
);

const StatusBar = () => (
  <footer className="flex h-[21px] shrink-0 items-center justify-between border-t border-[#808080] bg-[#f0edeb] pl-1 pr-[3px] font-['Roboto',sans-serif] text-[11px] leading-4 text-black">
    <span>Wybór: 27, Values: [184785923..3993039360], Ř2662112247,70, Sum:71877030688</span>
    <div className="flex h-full items-center whitespace-nowrap">
      <svg width="54" height="12" fill="none" stroke="#888" aria-hidden="true">
        <path d="M10 1.500H1.500L6 6l-4.500 4.500H10" strokeWidth="2" />
        <circle cx="29" cy="6" r="4" strokeWidth="2" strokeDasharray="2 1" />
        <path d="M47 3l-3 3 3 3M50 3l3 3-3 3" />
      </svg>
      <span className="ml-[10px] w-[82px]">Brak CS</span>
      <span className="flex h-full w-[283px] items-center border-l border-[#d4d0ce] pl-[10px]">{"Kursor: 274EDC => 1208119298 (1208119298) ->"}</span>
      <span>0 (0,00%), Szerokość: 16</span>
    </div>
  </footer>
);

export default function App() {
  return (
    <div className="flex h-screen flex-col overflow-hidden bg-[#eceefb] font-['Noto_Sans',sans-serif] text-black">
      <TitleBar />
      <ToolBar />
      <MenuBar />
      <div className="flex min-h-0 flex-1 pb-1">
        <SidePanel />
        <ChartPane />
      </div>
      <StatusBar />
    </div>
  );
}
